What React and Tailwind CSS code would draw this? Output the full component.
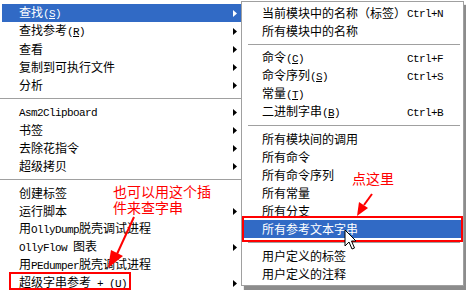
import React from 'react';

const left = [
  { t: '查找(&S)', arrow: true, hl: true },
  { t: '查找参考(&R)', arrow: true },
  { t: '查看', arrow: true },
  { t: '复制到可执行文件', arrow: true },
  { t: '分析', arrow: true },
  { sep: true },
  { t: 'Asm2Clipboard', arrow: true },
  { t: '书签', arrow: true },
  { t: '去除花指令', arrow: true },
  { t: '超级拷贝', arrow: true },
  { sep: true },
  { t: '创建标签' },
  { t: '运行脚本', arrow: true },
  { t: '用OllyDump脱壳调试进程' },
  { t: 'OllyFlow 图表', arrow: true },
  { t: '用PEdumper脱壳调试进程' },
  { t: '超级字串参考 + (&U)', arrow: true },
];

const sub = [
  { t: '当前模块中的名称（标签）', k: 'Ctrl+N' },
  { t: '所有模块中的名称' },
  { sep: true },
  { t: '命令(&C)', k: 'Ctrl+F' },
  { t: '命令序列(&S)', k: 'Ctrl+S' },
  { t: '常量(&T)' },
  { t: '二进制字串(&B)', k: 'Ctrl+B' },
  { sep: true },
  { t: '所有模块间的调用' },
  { t: '所有命令' },
  { t: '所有命令序列' },
  { t: '所有常量' },
  { t: '所有分支' },
  { t: '所有参考文本字串', hl: true },
  { sep: true },
  { t: '用户定义的标签' },
  { t: '用户定义的注释' },
];

// split into CJK / ascii runs, '&X' = underlined mnemonic
function Label({ s }) {
  const parts = s.split(/([\x20-\x7e]+)/).filter(Boolean);
  return (
    <span className="whitespace-pre">
      {parts.map((p, i) => {
        if (!/^[\x20-\x7e]+$/.test(p)) return <span key={i}>{p}</span>;
        const bits = p.split(/&(.)/);
        return (
          <span key={i} className="font-['Liberation_Mono',monospace] text-[11px] tracking-[-0.6px]">
            {bits.map((b, j) => (j % 2 ? <u key={j}>{b}</u> : b))}
          </span>
        );
      })}
    </span>
  );
}

function Arrow({ white }) {
  return (
    <svg width="4" height="7" viewBox="0 0 4 7" className="shrink-0">
      <path d="M0 0 L4 3.5 L0 7 Z" fill={white ? '#fff' : '#000'} />
    </svg>
  );
}

export default function App() {
  return (
    <div className="relative w-[466px] h-[290px] overflow-hidden bg-white flex font-['Noto_Sans_CJK_SC',sans-serif] text-[12px] leading-none text-black">
      {/* main menu */}
      <div className="w-[241px] shrink-0 pt-[4px] pl-[2px]">
        {left.map((it, i) =>
          it.sep ? (
            <div key={i} className="h-[9px] -ml-[2px] flex items-center">
              <div className="h-px w-full bg-[#a0a0a0]" />
            </div>
          ) : (
            <div
              key={i}
              className={`h-[18px] flex items-center justify-between pl-[17px] pr-[4px] ${it.hl ? 'bg-[#316ac5] text-white' : ''}`}
            >
              <Label s={it.t} />
              {it.arrow && <Arrow white={it.hl} />}
            </div>
          )
        )}
      </div>

      {/* submenu */}
      <div className="w-[223px] shrink-0 mt-[1px] self-start border border-[#a0a0a0] bg-white p-[2px] shadow-[3px_4px_1px_rgba(0,0,0,0.45)]">
        {sub.map((it, i) =>
          it.sep ? (
            <div key={i} className="h-[9px] flex items-center pl-[4px] pr-[1px]">
              <div className="h-px w-full bg-[#a0a0a0]" />
            </div>
          ) : (
            <div
              key={i}
              className={`h-[18px] flex items-center pl-[18px] ${it.hl ? 'bg-[#316ac5] text-white' : ''}`}
            >
              <span className="flex-1">
                <Label s={it.t} />
              </span>
              {it.k && (
                <span className="w-[54px] shrink-0">
                  <Label s={it.k} />
                </span>
              )}
            </div>
          )
        )}
      </div>

      {/* annotations */}
      <div className="absolute left-[9px] top-[272px] w-[122px] h-[18px] border-2 border-[#ff0000]" />
      <div className="absolute left-[242px] top-[216px] w-[221px] h-[26px] border-2 border-[#ff0000]" />

      <div className="absolute left-[113px] top-[183px] text-[14px] leading-[16px] text-[#ff0000]">
        <div>也可以用这个插</div>
        <div>件来查字串</div>
      </div>
      <div className="absolute left-[352px] top-[170px] text-[14px] leading-[16px] text-[#ff0000]">点这里</div>

      <svg className="absolute inset-0 pointer-events-none" width="466" height="290">
        <line x1="134" y1="217" x2="117" y2="254" stroke="#ff0000" strokeWidth="2" />
        <polygon points="111,250 123,256 108,268" fill="#ff0000" />
        <line x1="372" y1="194" x2="364" y2="205" stroke="#ff0000" strokeWidth="2" />
        <polygon points="359,202 368,208 357,216" fill="#ff0000" />
        <path
          d="M345 230 L345 246 L349 242 L352 249 L354.5 248 L351.5 241 L356 241 Z"
          fill="#fff"
          stroke="#000"
          strokeWidth="1"
          strokeLinejoin="miter"
        />
      </svg>
    </div>
  );
}
